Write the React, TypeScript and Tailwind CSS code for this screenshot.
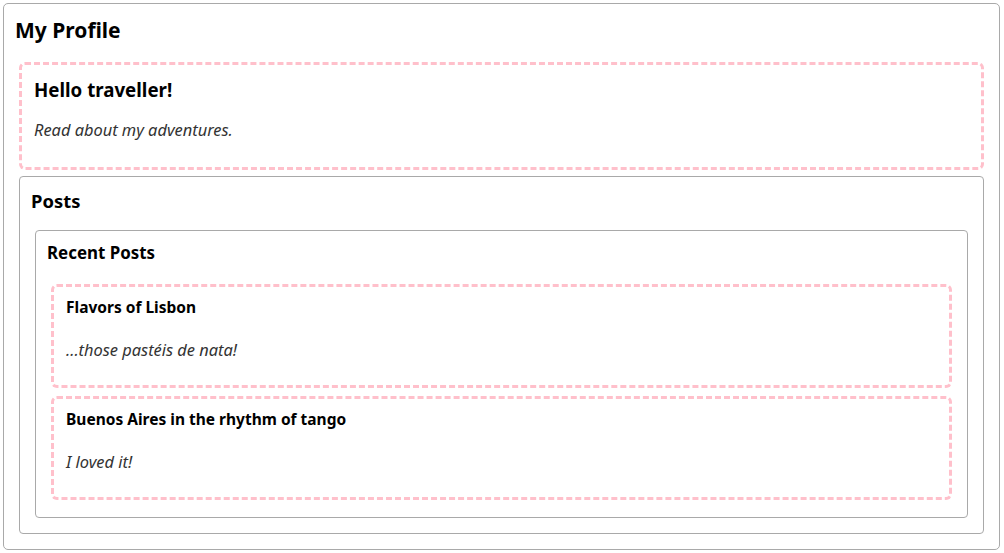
const posts = [
  { title: "Flavors of Lisbon", excerpt: "...those pastéis de nata!" },
  { title: "Buenos Aires in the rhythm of tango", excerpt: "I loved it!" },
];

function PostCard({ title, excerpt }: { title: string; excerpt: string }) {
  return (
    <div className="mx-[4px] flex h-[104px] flex-col rounded-[6px] border-[3px] border-dashed border-[#ffc0cb] px-[12px] pt-[11px]">
      <h4 className="text-[15.5px] font-bold leading-[18px] text-black">{title}</h4>
      <p className="mt-[23px] text-[16.4px] italic leading-[22px] text-[#333]">{excerpt}</p>
    </div>
  );
}

export default function App() {
  return (
    <div
      className="ml-[3px] mr-[4px] mt-[3px] flex h-[547px] flex-col rounded-[5px] border border-[#a9a9a9] bg-white px-[11px] pt-[11px] text-black"
      style={{ fontFamily: '"Noto Sans", "Noto Sans CJK KR", sans-serif' }}
    >
      <h1 className="text-[21px] font-bold leading-[30px]">My Profile</h1>

      {/* intro */}
      <div className="mx-[4px] mt-[17px] flex h-[108px] flex-col rounded-[6px] border-[3px] border-dashed border-[#ffc0cb] px-[12px] pt-[11px]">
        <h2 className="text-[18.7px] font-bold leading-[28px]">Hello traveller!</h2>
        <p className="mt-[14px] text-[16.4px] italic leading-[24px] text-[#333]">Read about my adventures.</p>
      </div>

      {/* posts */}
      <div className="mx-[4px] mt-[6px] flex h-[358px] flex-col rounded-[4px] border border-[#a9a9a9] px-[11px] pt-[11px]">
        <h2 className="text-[18.4px] font-bold leading-[26px]">Posts</h2>
        <div className="mx-[4px] mt-[16px] flex h-[288px] flex-col rounded-[4px] border border-[#a9a9a9] px-[11px] pt-[11px]">
          <h3 className="text-[16.9px] font-bold leading-[22px]">Recent Posts</h3>
          <div className="mt-[20px] flex flex-col gap-[8px]">
            {posts.map((p) => (
              <PostCard key={p.title} title={p.title} excerpt={p.excerpt} />
            ))}
          </div>
        </div>
      </div>
    </div>
  );
}
